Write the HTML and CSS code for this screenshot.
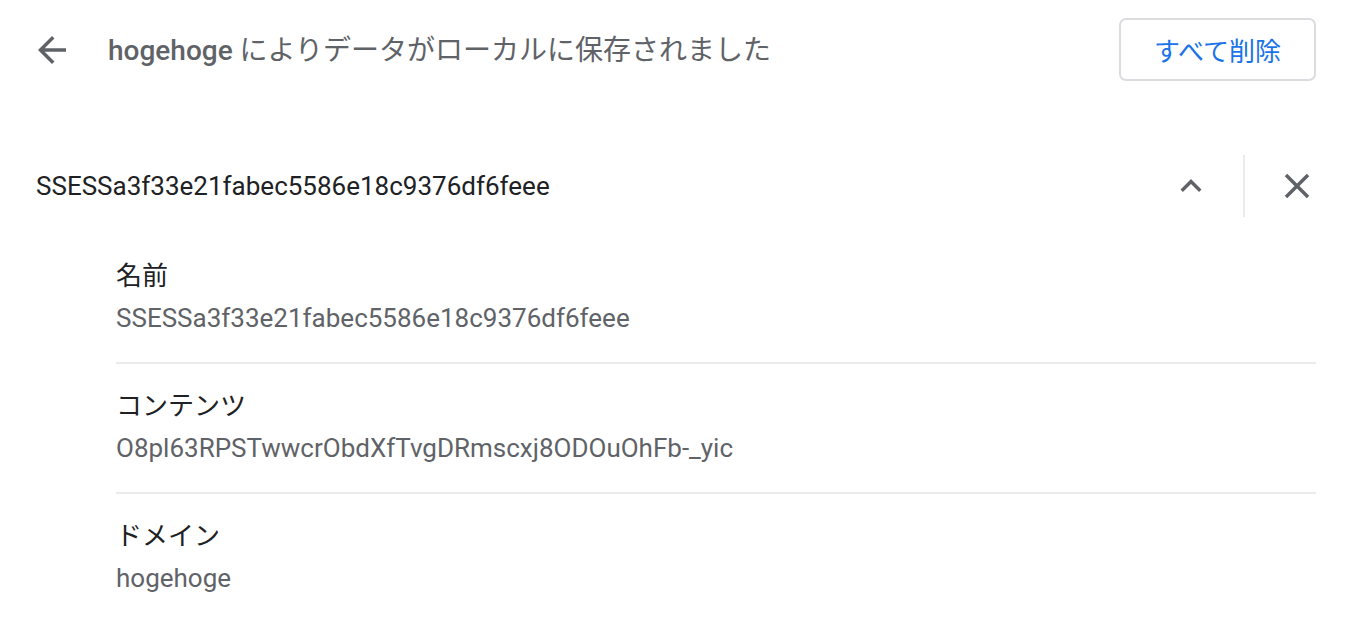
FILE: index.html
```html
<!DOCTYPE html>
<html lang="ja">
<head>
    <meta charset="UTF-8">
    <meta name="viewport" content="width=device-width, initial-scale=1.0">
    <title>Cookie</title>
    <link rel="stylesheet" href="styles.css">
</head>
<body>
    <div class="page">
        <div class="header">
            <button class="icon-btn back" aria-label="戻る">
                <svg viewBox="0 0 24 24" width="42" height="42"><path d="M20 11H7.83l5.59-5.59L12 4l-8 8 8 8 1.41-1.41L7.83 13H20v-2z"/></svg>
            </button>
            <h1 class="title"><span class="site">hogehoge</span> によりデータがローカルに保存されました</h1>
            <button class="btn">すべて削除</button>
        </div>

        <div class="cookie">
            <div class="cookie-head">
                <div class="cookie-name">SSESSa3f33e21fabec5586e18c9376df6feee</div>
                <button class="icon-btn" aria-label="閉じる">
                    <svg viewBox="0 0 24 24" width="42" height="42"><path d="M12 8l-6 6 1.41 1.41L12 10.83l4.59 4.58L18 14z"/></svg>
                </button>
                <div class="sep"></div>
                <button class="icon-btn" aria-label="削除">
                    <svg viewBox="0 0 24 24" width="42" height="42"><path d="M19 6.41L17.59 5 12 10.59 6.41 5 5 6.41 10.59 12 5 17.59 6.41 19 12 13.41 17.59 19 19 17.59 13.41 12z"/></svg>
                </button>
            </div>
            <div class="details">
                <div class="field">
                    <div class="label">名前</div>
                    <div class="value">SSESSa3f33e21fabec5586e18c9376df6feee</div>
                </div>
                <div class="field">
                    <div class="label">コンテンツ</div>
                    <div class="value">O8pl63RPSTwwcrObdXfTvgDRmscxj8ODOuOhFb-_yic</div>
                </div>
                <div class="field">
                    <div class="label">ドメイン</div>
                    <div class="value">hogehoge</div>
                </div>
            </div>
        </div>
    </div>
</body>
</html>
```

FILE: styles.css
```css
body {
    font-family: Roboto, "Noto Sans CJK JP", sans-serif;
    background-color: #fff;
    margin: 0;
    padding: 0;
    color: #202124;
}

.page {
    padding: 18px 36px 0 36px;
}

.header {
    display: flex;
    align-items: center;
    height: 63px;
}

.icon-btn {
    background: none;
    border: none;
    padding: 0;
    width: 42px;
    height: 42px;
    display: flex;
    align-items: center;
    justify-content: center;
    cursor: pointer;
}

.icon-btn svg {
    fill: #5f6368;
}

.back {
    margin-left: -5px;
    margin-right: 35px;
}

.title {
    flex: 1;
    margin: 0 0 3px;
    font-size: 28px;
    font-weight: 400;
    color: #5f6368;
}

.title .site {
    font-weight: 500;
}

.btn {
    font-family: inherit;
    font-size: 26px;
    color: #1a73e8;
    background-color: #fff;
    border: 2px solid #dadce0;
    border-radius: 7px;
    width: 197px;
    height: 63px;
    padding: 0;
    cursor: pointer;
}

.cookie {
    margin-top: 74px;
}

.cookie-head {
    display: flex;
    align-items: center;
    height: 62px;
}

.cookie-name {
    flex: 1;
    font-size: 26px;
}

.cookie-head .sep {
    width: 2px;
    height: 62px;
    background-color: #ebebeb;
    margin: 0 31px;
}

.cookie-head .icon-btn:last-child {
    margin-right: -2px;
}

.details {
    padding-left: 80px;
    margin-top: 17px;
}

.field {
    padding: 24px 0 26px;
    border-bottom: 2px solid #ebebeb;
}

.field:last-child {
    border-bottom: none;
}

.label {
    font-size: 26px;
    line-height: 36px;
}

.value {
    font-size: 26px;
    line-height: 36px;
    margin-top: 6px;
    color: #5f6368;
}
```
